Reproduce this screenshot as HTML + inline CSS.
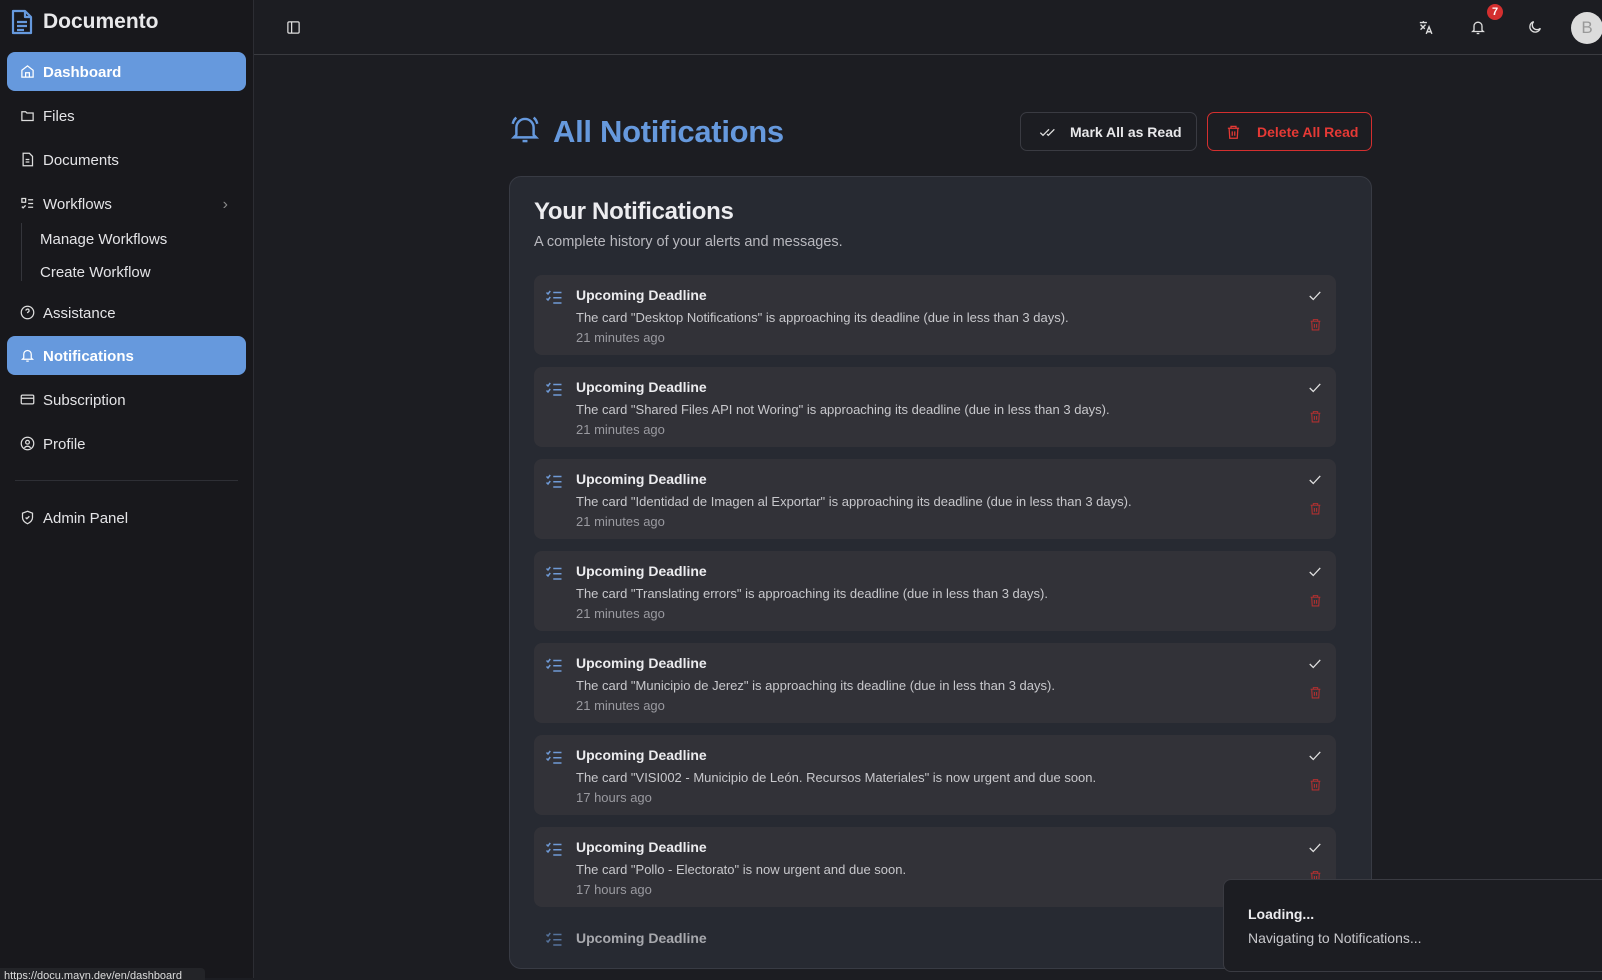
<!DOCTYPE html>
<html><head><meta charset="utf-8">
<style>
*{box-sizing:border-box;margin:0;padding:0}
body{width:1602px;height:978px;overflow:hidden;background:#1c1d22;font-family:"Liberation Sans",sans-serif;color:#e4e4e7;position:relative}
.abs{position:absolute}
svg{display:block}
.side{left:0;top:0;width:254px;height:978px;background:#18181c;border-right:1px solid #2c2d33}
.nav{position:absolute;left:7px;width:239px;height:39px;border-radius:8px;display:flex;align-items:center;padding-left:13px;padding-top:2px;font-size:15px;color:#e4e4e7}
.nav svg{margin-right:8px;margin-top:-2px}
.nav.act{background:#6699dd;color:#fff;font-weight:bold}
.sub{position:absolute;left:40px;font-size:15px;color:#e4e4e7}
.top{left:254px;top:0;right:0;height:55px;border-bottom:1px solid #3a3b40}
.card{left:509px;top:176px;width:863px;height:793px;background:#272a32;border:1px solid #383b44;border-radius:12px;overflow:hidden}
.item{position:absolute;left:24px;width:802px;height:80px;background:#323238;border-radius:8px}
.item .ic{position:absolute;left:11px;top:14px}
.item .t{position:absolute;left:42px;top:12px;font-size:14px;font-weight:bold;color:#ececef}
.item .d{position:absolute;left:42px;top:35px;font-size:13px;color:#c8c8cc}
.item .tm{position:absolute;left:42px;top:55px;font-size:13px;color:#9a9aa0}
.item .ck{position:absolute;right:14px;top:14px}
.item .tr{position:absolute;right:14px;top:42px}
</style></head><body>
<div class="abs side">
  <div class="abs" style="left:10px;top:9px"><svg width="24" height="26" viewBox="0 0 24 26" fill="none" stroke="#6699dd" stroke-width="2.2" stroke-linejoin="round"><path d="M3 2h12l6 6v16H3z"/><path d="M15 2v6h6"/><path d="M7 13h10M7 17h10M7 21h7"/></svg></div>
  <div class="abs" style="left:43px;top:10px;font-size:21px;font-weight:bold;color:#e8e8ea">Documento</div>

  <div class="nav act" style="top:52px"><svg width="15" height="15" viewBox="0 0 24 24" fill="none" stroke="#fff" stroke-width="2"><path d="M3 10l9-7 9 7v11H3z"/><path d="M9 21v-7h6v7"/></svg>Dashboard</div>
  <div class="nav" style="top:96px"><svg width="15" height="15" viewBox="0 0 24 24" fill="none" stroke="#ddd" stroke-width="2"><path d="M3 6h6l2 2h10v12H3z"/></svg>Files</div>
  <div class="nav" style="top:140px"><svg width="15" height="15" viewBox="0 0 24 24" fill="none" stroke="#ddd" stroke-width="2"><path d="M5 2h10l5 5v15H5z"/><path d="M9 12h6M9 16h6"/></svg>Documents</div>
  <div class="nav" style="top:184px"><svg width="15" height="15" viewBox="0 0 24 24" fill="none" stroke="#ddd" stroke-width="2"><rect x="3" y="4" width="6" height="6"/><path d="M3 17l2 2 4-4M13 6h8M13 12h8M13 18h8"/></svg>Workflows<span style="position:absolute;right:18px;color:#888;font-size:16px">›</span></div>
  <div class="abs" style="left:21px;top:223px;width:1px;height:58px;background:#34353b"></div>
  <div class="sub" style="top:231px">Manage Workflows</div>
  <div class="sub" style="top:264px">Create Workflow</div>
  <div class="nav" style="top:293px"><svg width="15" height="15" viewBox="0 0 24 24" fill="none" stroke="#ddd" stroke-width="2"><circle cx="12" cy="12" r="10"/><path d="M9.5 9a2.5 2.5 0 1 1 3.5 2.3c-.7.4-1 1-1 1.7M12 17h.01"/></svg>Assistance</div>
  <div class="nav act" style="top:336px"><svg width="15" height="15" viewBox="0 0 24 24" fill="none" stroke="#fff" stroke-width="2"><path d="M6 16V10a6 6 0 0 1 12 0v6l2 2H4z"/><path d="M10 21h4"/></svg>Notifications</div>
  <div class="nav" style="top:380px"><svg width="15" height="15" viewBox="0 0 24 24" fill="none" stroke="#ddd" stroke-width="2"><rect x="2" y="5" width="20" height="14" rx="2"/><path d="M2 10h20"/></svg>Subscription</div>
  <div class="nav" style="top:424px"><svg width="15" height="15" viewBox="0 0 24 24" fill="none" stroke="#ddd" stroke-width="2"><circle cx="12" cy="12" r="10"/><circle cx="12" cy="10" r="3"/><path d="M7 19a6 6 0 0 1 10 0"/></svg>Profile</div>
  <div class="abs" style="left:15px;top:480px;width:223px;height:1px;background:#2e2f35"></div>
  <div class="nav" style="top:498px"><svg width="15" height="15" viewBox="0 0 24 24" fill="none" stroke="#ddd" stroke-width="2"><path d="M12 2l8 3v7c0 5-4 8-8 10-4-2-8-5-8-10V5z"/><path d="M9 12l2 2 4-4"/></svg>Admin Panel</div>
  <div class="abs" style="left:0;top:968px;width:205px;height:12px;background:#232428;border-radius:0 4px 0 0;font-size:11px;color:#ddd;padding-left:4px;line-height:16px;overflow:hidden">https://docu.mayn.dev/en/dashboard</div>
</div>

<div class="abs top">
  <div class="abs" style="left:32px;top:20px"><svg width="15" height="15" viewBox="0 0 24 24" fill="none" stroke="#ddd" stroke-width="2"><rect x="3" y="3" width="18" height="18" rx="2"/><path d="M9 3v18"/></svg></div>
  <div class="abs" style="left:1163px;top:19px"><svg width="17" height="17" viewBox="0 0 24 24" fill="none" stroke="#ddd" stroke-width="2"><path d="M4 5h10M9 3v2M5 8l6 6M12 8l-7 7M13 21l4-10 4 10M14.5 18h5"/></svg></div>
  <div class="abs" style="left:1216px;top:19px"><svg width="16" height="17" viewBox="0 0 24 24" fill="none" stroke="#ddd" stroke-width="2"><path d="M6 16V10a6 6 0 0 1 12 0v6l2 2H4z"/><path d="M10 21h4"/></svg></div>
  <div class="abs" style="left:1233px;top:4px;width:16px;height:16px;border-radius:50%;background:#d32f2f;color:#fff;font-size:11px;font-weight:bold;text-align:center;line-height:16px">7</div>
  <div class="abs" style="left:1273px;top:19px"><svg width="16" height="16" viewBox="0 0 24 24" fill="none" stroke="#ddd" stroke-width="2"><path d="M20 14A8 8 0 1 1 10 4a6 6 0 0 0 10 10z"/></svg></div>
  <div class="abs" style="left:1317px;top:12px;width:32px;height:32px;border-radius:50%;background:#dcdcdc;color:#999;font-size:17px;text-align:center;line-height:32px">B</div>
</div>

<div class="abs" style="left:510px;top:114px"><svg width="30" height="32" viewBox="0 0 24 26" fill="none" stroke="#6699dd" stroke-width="2"><path d="M5 17V11a7 7 0 0 1 14 0v6l2 2H3z"/><path d="M10 22h4"/><path d="M2 8c.5-2 1.5-4 3-5M22 8c-.5-2-1.5-4-3-5"/></svg></div>
<div class="abs" style="left:553px;top:114px;font-size:31px;font-weight:bold;color:#6699dd;letter-spacing:-0.3px">All Notifications</div>
<div class="abs" style="left:1020px;top:112px;width:177px;height:39px;border:1px solid #3a3b42;border-radius:7px;background:#1c1d22;font-size:14px;font-weight:bold;color:#e8e8ea;display:flex;align-items:center;padding-left:18px"><svg width="16" height="16" viewBox="0 0 24 24" fill="none" stroke="#ddd" stroke-width="2" style="margin-right:15px"><path d="M2 13l4 4 9-9M12 15l2 2 9-9"/></svg>Mark All as Read</div>
<div class="abs" style="left:1207px;top:112px;width:165px;height:39px;border:1px solid #d32f2f;border-radius:7px;font-size:14px;font-weight:bold;color:#e53935;display:flex;align-items:center;padding-left:18px"><svg width="15" height="16" viewBox="0 0 24 24" fill="none" stroke="#e53935" stroke-width="2" style="margin-right:16px"><path d="M3 6h18M8 6V3h8v3M5 6l1 16h12l1-16M10 11v7M14 11v7"/></svg>Delete All Read</div>

<div class="abs card">
  <div class="abs" style="left:24px;top:21px;font-size:24px;font-weight:bold;color:#ececef;letter-spacing:-0.3px">Your Notifications</div>
  <div class="abs" style="left:24px;top:57px;font-size:14.5px;color:#b8b8be">A complete history of your alerts and messages.</div>
  <div id="items"></div>
</div>

<div class="abs" style="left:1223px;top:879px;width:390px;height:93px;background:#1c1d22;border:1px solid #3a3b42;border-radius:8px">
  <div class="abs" style="left:24px;top:26px;font-size:14px;font-weight:bold;color:#ececef">Loading...</div>
  <div class="abs" style="left:24px;top:50px;font-size:14px;color:#c8c8cc">Navigating to Notifications...</div>
</div>

<script>
var d=[['Desktop Notifications','is approaching its deadline (due in less than 3 days).','21 minutes ago'],
['Shared Files API not Woring','is approaching its deadline (due in less than 3 days).','21 minutes ago'],
['Identidad de Imagen al Exportar','is approaching its deadline (due in less than 3 days).','21 minutes ago'],
['Translating errors','is approaching its deadline (due in less than 3 days).','21 minutes ago'],
['Municipio de Jerez','is approaching its deadline (due in less than 3 days).','21 minutes ago'],
['VISI002 - Municipio de León. Recursos Materiales','is now urgent and due soon.','17 hours ago'],
['Pollo - Electorato','is now urgent and due soon.','17 hours ago']];
var ic='<svg width="18" height="16" viewBox="0 0 24 20" fill="none" stroke="#6f9ad6" stroke-width="2"><path d="M2 4l2 2 3-4M2 12l2 2 3-4M11 4h11M11 11h11M11 18h11"/></svg>';
var ck='<svg width="14" height="14" viewBox="0 0 24 24" fill="none" stroke="#e0e0e0" stroke-width="2.2"><path d="M3 12l6 6L21 5"/></svg>';
var tr='<svg width="13" height="15" viewBox="0 0 24 24" fill="none" stroke="#b03030" stroke-width="2"><path d="M3 6h18M8 6V3h8v3M5 6l1 16h12l1-16M10 11v7M14 11v7"/></svg>';
var h='';
d.forEach(function(x,i){
h+='<div class="item" style="top:'+(98+i*92)+'px"><div class="ic">'+ic+'</div><div class="t">Upcoming Deadline</div><div class="d">The card "'+x[0]+'" '+x[1]+'</div><div class="tm">'+x[2]+'</div><div class="ck">'+ck+'</div><div class="tr">'+tr+'</div></div>';
});
h+='<div class="item" style="top:742px;background:transparent;opacity:.65"><div class="ic" style="top:12px">'+ic+'</div><div class="t" style="top:11px">Upcoming Deadline</div></div>';
document.getElementById('items').innerHTML=h;
</script>
</body></html>
